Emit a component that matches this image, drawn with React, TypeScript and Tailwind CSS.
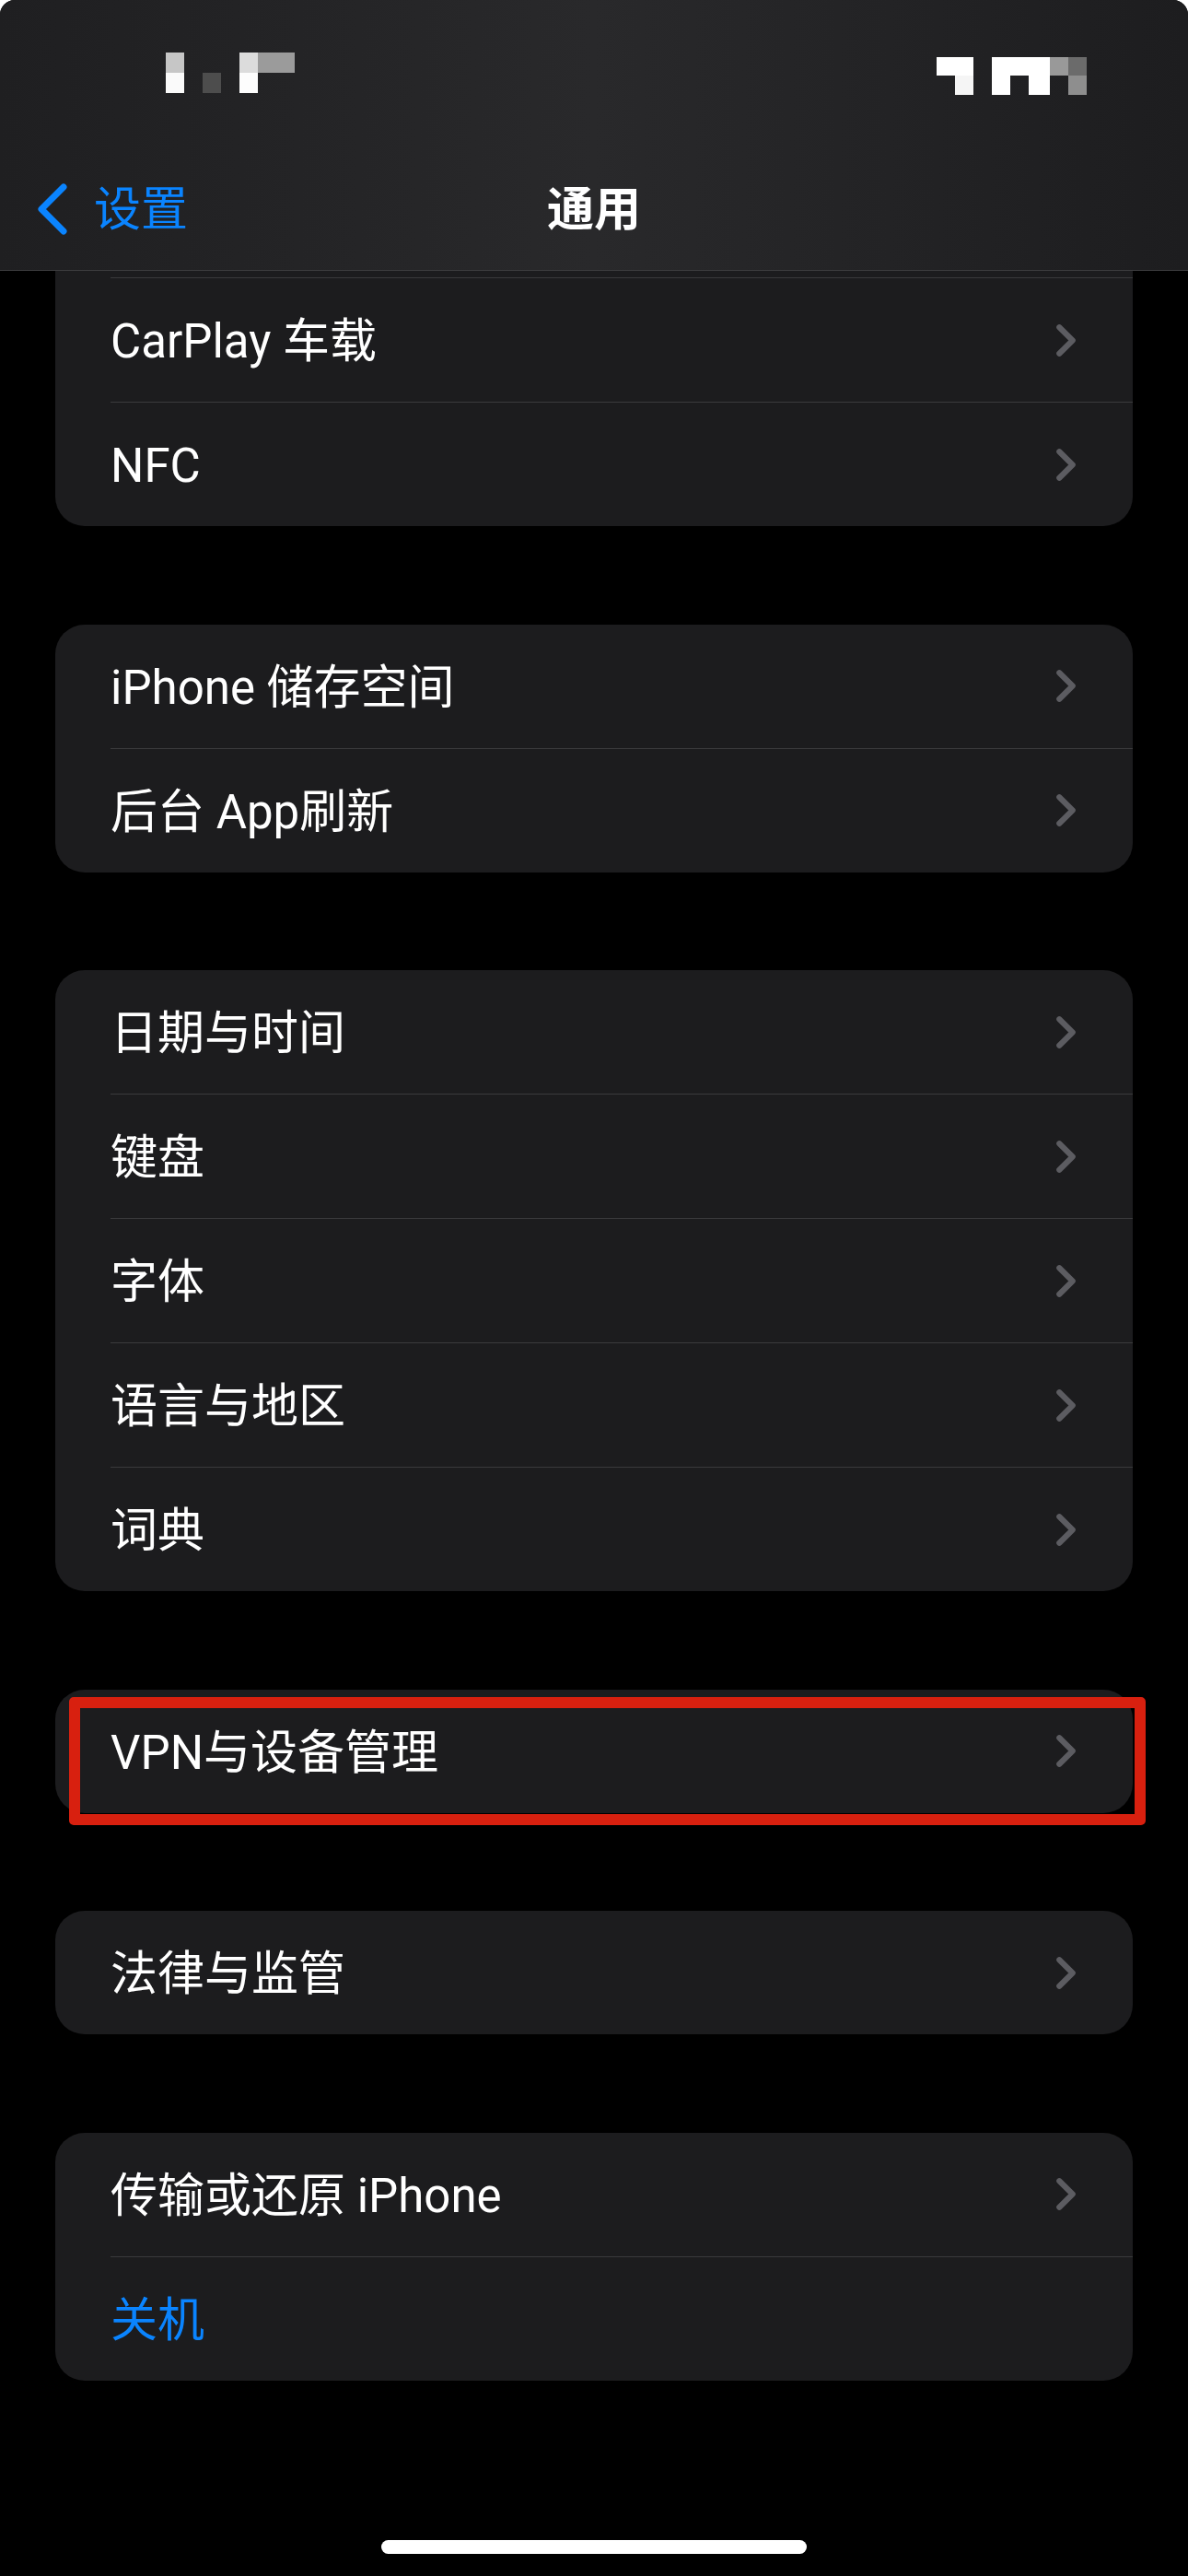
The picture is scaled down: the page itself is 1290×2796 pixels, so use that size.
import React from "react";

const FONT = { fontFamily: 'Roboto, "Noto Sans CJK SC", sans-serif' };

function Chevron() {
  return (
    <svg width="21" height="35" viewBox="0 0 21 35" className="shrink-0">
      <path d="M3.3 3.3 L17.7 17.5 L3.3 31.7" fill="none" stroke="#5c5c61" strokeWidth="6.2" strokeLinecap="round" strokeLinejoin="round" />
    </svg>
  );
}

function Row({ label, first, blue, chevron = true }: { label: string; first?: boolean; blue?: boolean; chevron?: boolean }) {
  return (
    <div className="pl-[60px]">
      <div className={"flex items-center pr-[62px] " + (first ? "h-[134px]" : "h-[135px] border-t border-[#3a3a3c]")}>
        <span className={"flex-1 pt-[3px] text-[51px] leading-none " + (blue ? "text-[#0a84ff]" : "text-white")}>{label}</span>
        {chevron && <Chevron />}
      </div>
    </div>
  );
}

function Group({ items, children }: { items: { label: string; blue?: boolean; chevron?: boolean }[]; children?: React.ReactNode }) {
  return (
    <div className="relative mx-[60px] rounded-[32px] bg-[#1c1c1e]">
      {items.map((it, i) => (
        <Row key={it.label} label={it.label} first={i === 0} blue={it.blue} chevron={it.chevron} />
      ))}
      {children}
    </div>
  );
}

export default function App() {
  return (
    <div style={FONT} className="relative h-[2796px] w-[1290px] overflow-hidden rounded-t-[16px] bg-black">
      {/* Header */}
      <div className="sticky top-0 z-10 flex h-[294px] flex-col border-b border-[#3c3c3e] bg-linear-to-r from-[#1f1f21] via-[#29292b] to-[#1d1d1f]">
        <div className="flex h-[180px] items-start justify-between">
          <svg width="140" height="44" viewBox="0 0 140 44" className="ml-[180px] mt-[57px]">
            <rect x="0" y="0" width="20" height="22" fill="#c6c6c6" />
            <rect x="0" y="22" width="20" height="22" fill="#fafafa" />
            <rect x="40" y="22" width="20" height="22" fill="#4d4d4d" />
            <rect x="80" y="0" width="20" height="22" fill="#dcdcdc" />
            <rect x="80" y="22" width="20" height="22" fill="#fdfdfd" />
            <rect x="100" y="0" width="40" height="22" fill="#9b9b9b" />
          </svg>
          <svg width="163" height="41" viewBox="0 0 163 41" className="mr-[110px] mt-[62px]">
            <rect x="0" y="0" width="40" height="20" fill="#ffffff" />
            <rect x="20" y="20" width="20" height="21" fill="#f5f5f5" />
            <rect x="60" y="0" width="20" height="41" fill="#ffffff" />
            <rect x="80" y="0" width="43" height="20" fill="#ffffff" />
            <rect x="100" y="20" width="23" height="21" fill="#ffffff" />
            <rect x="123" y="0" width="20" height="20" fill="#999999" />
            <rect x="143" y="0" width="20" height="20" fill="#6b6b6b" />
            <rect x="143" y="20" width="20" height="21" fill="#8e8e8e" />
          </svg>
        </div>
        <div className="grid h-[94px] grid-cols-[1fr_auto_1fr] items-center">
          <div className="flex items-center pl-[40px]">
            <svg width="33" height="56" viewBox="0 0 33 56">
              <path d="M29 4 L5 28 L29 52" fill="none" stroke="#0a84ff" strokeWidth="7" strokeLinecap="round" strokeLinejoin="round" />
            </svg>
            <span className="ml-[29px] text-[51px] leading-none text-[#0a84ff]">设置</span>
          </div>
          <span className="text-[51px] font-semibold leading-none text-white">通用</span>
          <div />
        </div>
      </div>

      {/* Content */}
      <div className="flex flex-col gap-[106.5px]">
        <div className="mx-[60px] rounded-b-[32px] bg-[#1c1c1e]">
          <div className="h-[7px]" />
          <div className="pl-[60px]">
            <div className="flex h-[135px] items-center border-t border-[#3a3a3c] pr-[62px]">
              <span className="flex-1 pt-[3px] text-[51px] leading-none text-white">CarPlay 车载</span>
              <Chevron />
            </div>
          </div>
          <div className="pl-[60px]">
            <div className="flex h-[135px] items-center border-t border-[#3a3a3c] pr-[62px]">
              <span className="flex-1 pt-[3px] text-[51px] leading-none text-white">NFC</span>
              <Chevron />
            </div>
          </div>
        </div>

        <Group items={[{ label: "iPhone 储存空间" }, { label: "后台 App刷新" }]} />

        <Group items={[{ label: "日期与时间" }, { label: "键盘" }, { label: "字体" }, { label: "语言与地区" }, { label: "词典" }]} />

        <Group items={[{ label: "VPN与设备管理" }]}>
          <div className="pointer-events-none absolute left-[15px] top-[8px] h-[139px] w-[1169px] rounded-[5px] border-[12px] border-[#d8200f]" />
        </Group>

        <Group items={[{ label: "法律与监管" }]} />

        <Group items={[{ label: "传输或还原 iPhone" }, { label: "关机", blue: true, chevron: false }]} />
      </div>

      {/* Home indicator */}
      <div className="absolute bottom-[24px] left-[414px] h-[15px] w-[462px] rounded-full bg-white" />
    </div>
  );
}
